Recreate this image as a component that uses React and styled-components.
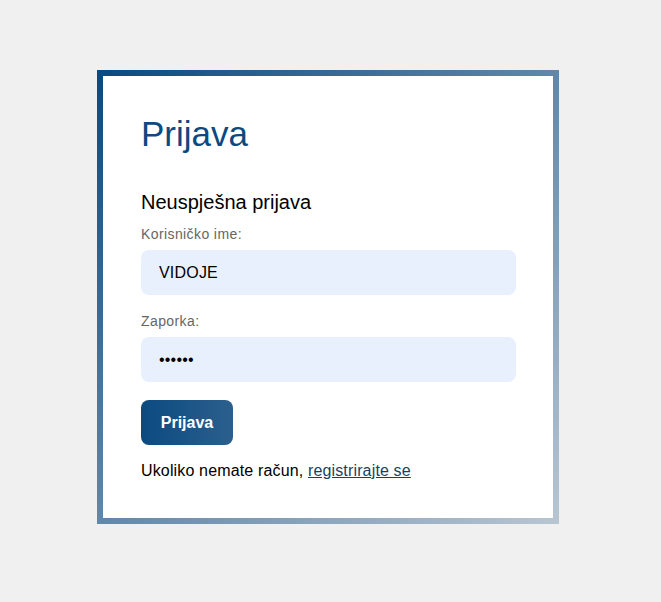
import styled, { createGlobalStyle } from "styled-components";

const GlobalStyle = createGlobalStyle`
    html, body {
        margin: 0;
        padding: 0;
        background: #f0f0f0;
        font-family: "Liberation Sans", Arial, sans-serif;
    }
    * {
        box-sizing: border-box;
    }
`

export default function App() {
    return (
        <>
            <GlobalStyle />
            <Page>
                <Card>
                    <Title>Prijava</Title>
                    <Message>Neuspješna prijava</Message>
                    <Label htmlFor="username">Korisničko ime:</Label>
                    <Input id="username" type="text" defaultValue="VIDOJE" />
                    <Label htmlFor="password" $spaced>Zaporka:</Label>
                    <Input id="password" type="password" defaultValue="123456" />
                    <Button type="button">Prijava</Button>
                    <Footer>
                        Ukoliko nemate račun, <RegisterLink href="#">registrirajte se</RegisterLink>
                    </Footer>
                </Card>
            </Page>
        </>
    );
}

const Page = styled.div`
    display: flex;
    align-items: flex-start;
    min-height: 100vh;
    padding: 70px 0 0 97px;
`

const Card = styled.div`
    display: flex;
    flex-direction: column;
    align-items: flex-start;
    flex-shrink: 0;
    width: 462px;
    padding: 38px 37px 38px 38px;
    background: #fff;
    border: 6px solid transparent;
    border-image: linear-gradient(to bottom right, #0b4a80, #b7c5d2) 1;
`

const Title = styled.h1`
    margin: 0 0 37px;
    font-size: 35px;
    font-weight: 400;
    line-height: 40px;
    color: #0b4a80;
`

const Message = styled.h2`
    margin: 0 0 12px;
    font-size: 20px;
    font-weight: 400;
    line-height: 23px;
    color: #000;
`

const Label = styled.label`
    display: block;
    margin: ${(p) => (p.$spaced ? "18px" : "0")} 0 8px;
    font-size: 14px;
    line-height: 16px;
    letter-spacing: 0.4px;
    color: #666;
`

const Input = styled.input`
    flex-shrink: 0;
    width: 375px;
    height: 45px;
    padding: 0 18px;
    border: none;
    border-radius: 8px;
    background: #e8f0fe;
    font-family: "Liberation Sans", Arial, sans-serif;
    font-size: 16px;
    letter-spacing: 0.2px;
    color: #000;
    outline: none;
`

const Button = styled.button`
    flex-shrink: 0;
    margin-top: 18px;
    width: 92px;
    height: 45px;
    padding: 0;
    border: none;
    border-radius: 8px;
    background: linear-gradient(to right, #0b4a80, #2b5f8d);
    color: #fff;
    font-family: "Liberation Sans", Arial, sans-serif;
    font-size: 16px;
    font-weight: 700;
    cursor: pointer;
`

const Footer = styled.p`
    margin: 17px 0 0;
    font-size: 16px;
    line-height: 18px;
    letter-spacing: 0.15px;
    color: #000;
`

const RegisterLink = styled.a`
    color: #1c3f5f;
    text-decoration: underline;
`
